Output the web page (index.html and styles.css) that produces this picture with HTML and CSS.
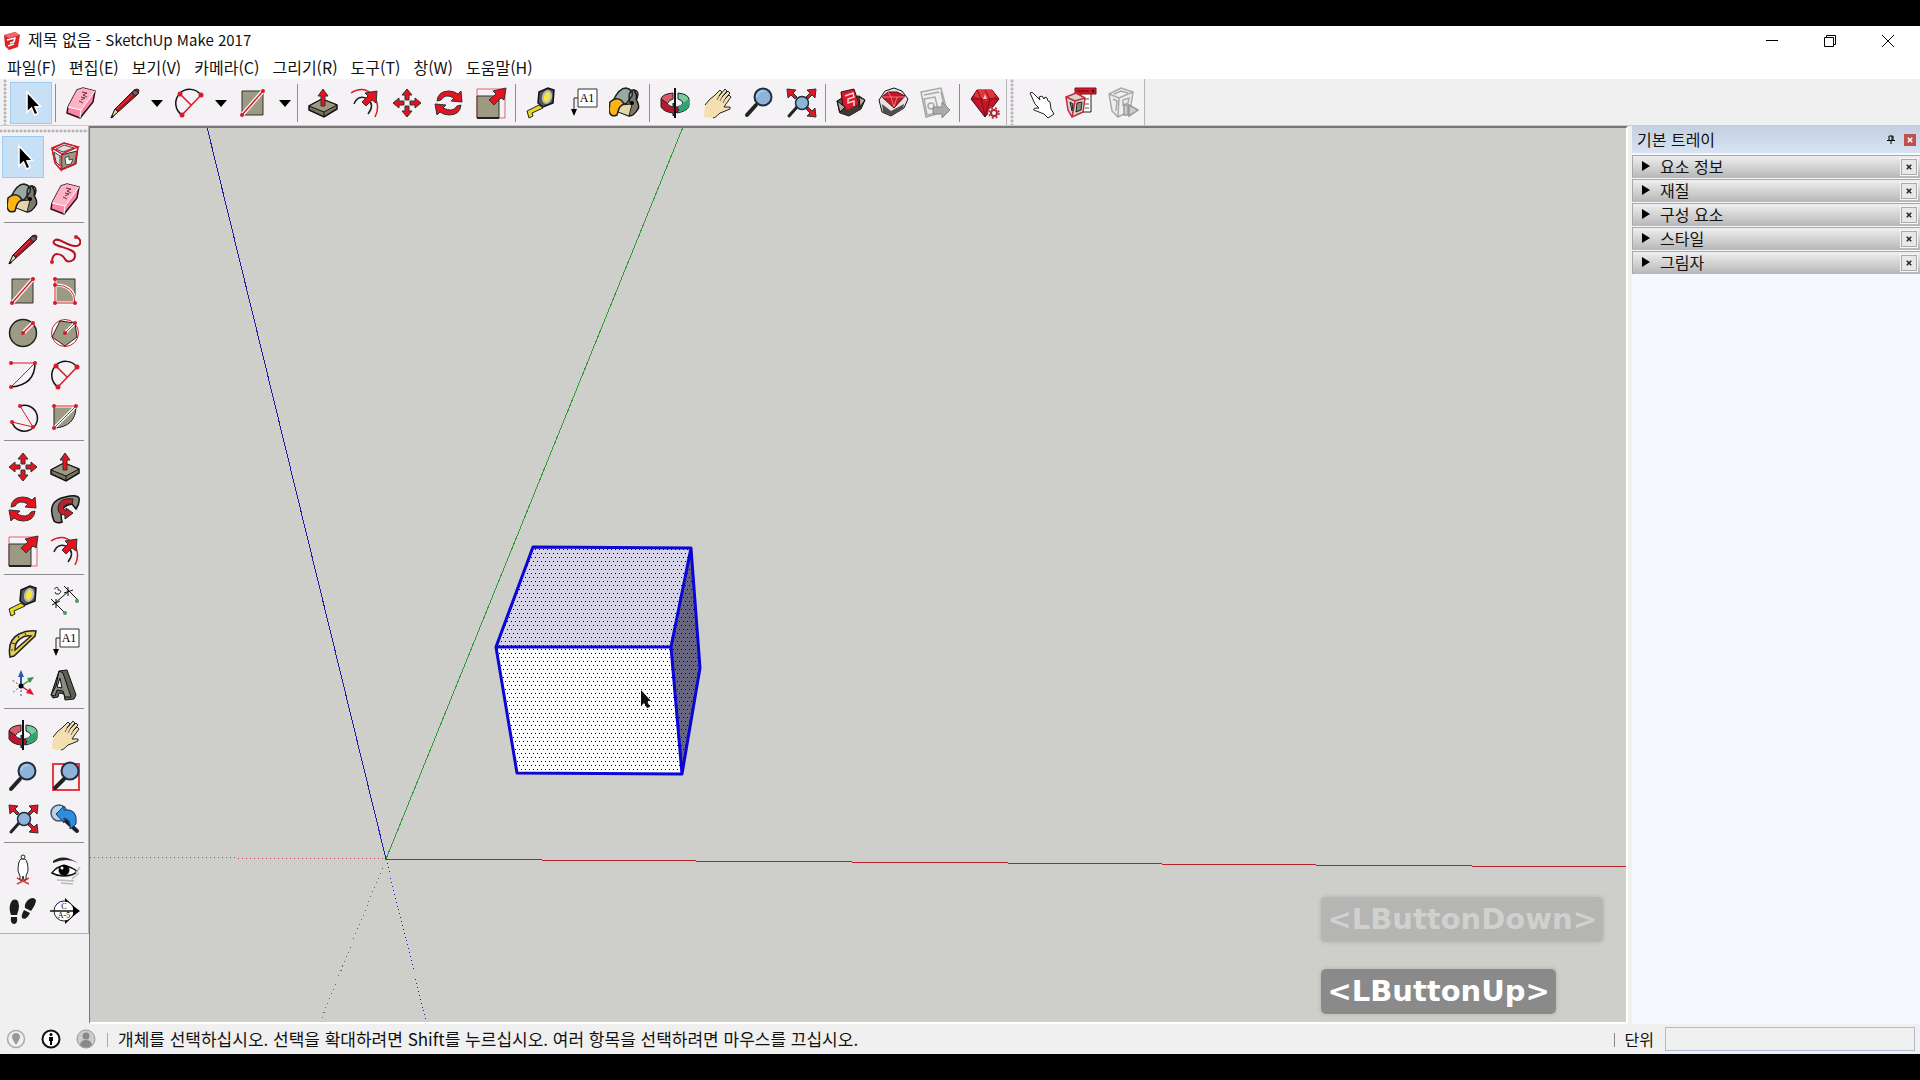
FILE: index.html
```html
<!DOCTYPE html>
<html lang="ko">
<head>
  <meta charset="UTF-8" />
  <meta name="viewport" content="width=device-width, initial-scale=1.0"/>
  <title>제목 없음 - SketchUp Make 2017</title>
  <link rel="stylesheet" href="styles.css">
</head>
<body>

  <!-- Icon set, every symbol on a 32x32 grid -->
  <svg class="sprite" aria-hidden="true">
    <symbol id="i-select" viewBox="0 0 32 32">
      <path d="M12 5V25L16.500 21 19.500 28 23 26.500 20 20 25.500 19.500Z" fill="#000" stroke="#fff" stroke-width="1.500"/>
    </symbol>
    <symbol id="i-component" viewBox="0 0 32 32">
      <path d="M3 8 15 2 29 6 27 23 12 29 6 22Z" fill="#fff" stroke="#222"/>
      <path d="M12 14 28 10 26 23 13 28Z" fill="#9c9a82" stroke="#222"/>
      <path d="M7 8 15 4 25 7 14 11ZM5 11 11 15 11 25 7 21Z" fill="#ddd" stroke="#444"/>
      <path d="M16 17l4-2v4l4-1-2 5-5 1z" fill="#fff" stroke="#444"/>
      <path d="M3 7 15 2 29 6 13 13ZM3 7 6 22 12 29 13 13M29 6 26 23 12 29" fill="none" stroke="#d8192b" stroke-width="1.500"/>
    </symbol>
    <symbol id="i-bucket" viewBox="0 0 32 32">
      <path d="M12 5 25 3Q29 9 27 12 31 19 29 22 25 29 20 29L9 24Z" fill="#80796b" stroke="#111" stroke-width="1.500"/>
      <path d="M11 18 23 17 20 29 9 25Z" fill="#e4d5aa" stroke="#222"/>
      <path d="M4 14Q10 1 17 1 25 3 23 9L17 17Z" fill="#9aa8a2" stroke="#222" stroke-width="1.500"/>
      <path d="M1 15Q8 9 13 14L15 17Q10 18 8 28 1 31 0 23Z" fill="#fdb515" stroke="#222" stroke-width="1.500"/>
      <path d="M21 16Q18 4 25 3 31 4 28 12" fill="none" stroke="#222" stroke-width="1.500"/><circle cx="23" cy="16" r="2"/>
    </symbol>
    <symbol id="i-eraser" viewBox="0 0 32 32">
      <path d="M12 3 18 1 30 4 28 15 15 31 2 26 3 20Z" fill="#fb86a5" stroke="#301018" stroke-width="1.500"/>
      <path d="M12 3 18 1 30 4 16 23 3 20Z" fill="#fcb3c4"/><path d="M30 4 16 23 15 31M3 20 16 23" fill="none" stroke="#fff"/>
      <path d="M17 5 22 6 18 8 22 10M16 10 20 11 16 13M14 14 18 16" fill="none" stroke="#683040"/>
    </symbol>
    <symbol id="i-pencil" viewBox="0 0 32 32">
      <path d="M25 3Q28 1 30 3 30 5 28 8L9 25 2 31 6 22Z" fill="#b5121f" stroke="#222"/>
      <path d="M6 22 9 25 2 31Z" fill="#ecd9a0" stroke="#222"/><path d="M23 5 26 9 30 6 26 3Z" fill="#666" stroke="#222"/><path d="M8 22 23 8" stroke="#e0505a"/><path d="M2 31 3 28 5 30Z"/>
    </symbol>
    <symbol id="i-freehand" viewBox="0 0 32 32">
      <path d="M27 4C33 6 33 13 26 13 17 13 9 3 5 8 1 14 26 14 26 22 26 29 18 30 16 26 13 21 3 17 3 29" fill="none" stroke="#b5121f" stroke-width="2"/>
      <circle cx="27" cy="4" r="2" fill="#d8192b"/><circle cx="3" cy="29" r="2" fill="#d8192b"/>
    </symbol>
    <symbol id="i-rect" viewBox="0 0 32 32">
      <path d="M5 4H26V28H5Z" fill="#9c9a82" stroke="#333"/><path d="M5 28 26 4" stroke="#fff" stroke-width="4"/><path d="M5 28 26 4" stroke="#d8192b" stroke-width="1.500"/>
      <circle cx="5" cy="28" r="2" fill="#d8192b"/><circle cx="26" cy="4" r="2" fill="#d8192b"/>
    </symbol>
    <symbol id="i-rotrect" viewBox="0 0 32 32">
      <path d="M6 4H26V28H6Z" fill="#9c9a82" stroke="#333"/><path d="M6 4V28H26Q26 10 6 10" fill="none" stroke="#fff" stroke-width="3"/><path d="M6 4V28H26Q26 10 6 10" fill="none" stroke="#d8192b"/>
      <g fill="#d8192b"><circle cx="6" cy="4" r="2"/><circle cx="6" cy="10" r="2"/><circle cx="6" cy="28" r="2"/><circle cx="26" cy="28" r="2"/></g>
    </symbol>
    <symbol id="i-circle" viewBox="0 0 32 32">
      <circle cx="16" cy="16" r="13.500" fill="#9c9a82" stroke="#222" stroke-width="1.500"/><path d="M16 16 26 6" stroke="#fff" stroke-width="4"/><path d="M16 16 26 6" stroke="#d8192b" stroke-width="1.500"/>
      <circle cx="16" cy="16" r="2" fill="#d8192b"/><circle cx="26" cy="6" r="2" fill="#d8192b"/>
    </symbol>
    <symbol id="i-polygon" viewBox="0 0 32 32">
      <circle cx="16" cy="16" r="13.500" fill="#fff" stroke="#d8192b"/><path d="M11 4 26 6 28 20 16 29 3 20Z" fill="#9c9a82" stroke="#222"/><path d="M16 16 26 6" stroke="#fff" stroke-width="3"/><path d="M16 16 26 6" stroke="#d8192b"/>
      <circle cx="16" cy="16" r="2" fill="#d8192b"/><circle cx="26" cy="6" r="2" fill="#d8192b"/>
    </symbol>
    <symbol id="i-arc" viewBox="0 0 32 32">
      <path d="M28 4Q28 26 4 28" fill="none" stroke="#111" stroke-width="1.500"/><path d="M4 4H28L4 28" fill="none" stroke="#d8192b"/>
      <g fill="#d8192b"><circle cx="4" cy="4" r="2"/><circle cx="28" cy="4" r="2"/><circle cx="4" cy="28" r="2"/></g>
    </symbol>
    <symbol id="i-arc2" viewBox="0 0 32 32">
      <path d="M28 8A14 14 0 1 0 9 28" fill="none" stroke="#111" stroke-width="1.500"/><path d="M28 8 9 28M7 7 18 18" fill="none" stroke="#d8192b" stroke-width="1.500"/>
      <g fill="#d8192b"><circle cx="28" cy="8" r="2.500"/><circle cx="7" cy="7" r="2.500"/><circle cx="9" cy="28" r="2.500"/></g>
    </symbol>
    <symbol id="i-arc3" viewBox="0 0 32 32">
      <path d="M13 5A13 13 0 1 1 5 21" fill="none" stroke="#111" stroke-width="1.500"/><path d="M13 5 26 26 5 21" fill="none" stroke="#d8192b"/>
      <g fill="#d8192b"><circle cx="13" cy="5" r="2"/><circle cx="5" cy="21" r="2"/><circle cx="26" cy="26" r="2"/></g>
    </symbol>
    <symbol id="i-pie" viewBox="0 0 32 32">
      <path d="M5 5H27Q27 26 5 27Z" fill="#9c9a82" stroke="#222"/><path d="M5 5H27L5 27" fill="none" stroke="#fff" stroke-width="3"/><path d="M5 5H27L5 27" fill="none" stroke="#d8192b"/>
      <g fill="#d8192b"><circle cx="5" cy="5" r="2"/><circle cx="27" cy="5" r="2"/><circle cx="5" cy="27" r="2"/></g>
    </symbol>
    <symbol id="i-move" viewBox="0 0 32 32">
      <g fill="#e5121f" stroke="#333"><path d="M16 2 21 8H18V13H14V8H11Z"/><path d="M30 16 24 11V14H19V18H24V21Z"/><path d="M16 30 11 24H14V19H18V24H21Z"/><path d="M2 16 8 21V18H13V14H8V11Z"/></g>
    </symbol>
    <symbol id="i-pushpull" viewBox="0 0 32 32">
      <path d="M2 19 15 12 30 18V22L17 30 2 23Z" fill="#77755f" stroke="#111" stroke-width="1.500"/><path d="M2 19 15 12 30 18 17 25Z" fill="#9c9a82" stroke="#111"/><path d="M17 25V30" stroke="#111"/>
      <path d="M16 2 21 9H18V19H14V9H11Z" fill="#e5121f" stroke="#333"/>
    </symbol>
    <symbol id="i-rotate" viewBox="0 0 32 32">
      <g fill="#e5121f" stroke="#333"><path d="M4 14Q5 4 16 4 21 4 25 7L28 4 29 15 18 14 21 11Q12 6 8 13Z"/><path d="M28 18Q27 28 16 28 11 28 7 25L4 28 2 17 13 18 10 21Q20 26 24 19Z"/></g>
    </symbol>
    <symbol id="i-followme" viewBox="0 0 32 32">
      <path d="M5 28Q-3 8 16 4 28 1 30 5 31 10 27 16L23 11Q9 13 13 29 8 31 5 28Z" fill="#8a887d" stroke="#111" stroke-width="1.500"/>
      <path d="M24 6Q10 4 9 15 9 22 16 22V26L24 20 17 15V18Q13 16 15 13 18 10 23 11Z" fill="#c0202b" stroke="#222"/>
    </symbol>
    <symbol id="i-scale" viewBox="0 0 32 32">
      <path d="M2 2H30V31H2Z" fill="none" stroke="#e86070"/><path d="M2 9H24V31H2Z" fill="#9c9a82" stroke="#333"/><path d="M2 31H24" stroke="#222" stroke-width="2"/>
      <path d="M31 1 29 13 26 11 19 18 14 13 21 7 18 4Z" fill="#e5121f" stroke="#333"/>
    </symbol>
    <symbol id="i-offset" viewBox="0 0 32 32">
      <path d="M2 6Q14-2 24 8 32 19 26 30" fill="none" stroke="#e5121f" stroke-width="1.500"/><path d="M5 17Q9 7 19 12 26 18 19 27" fill="none" stroke="#222" stroke-width="1.500"/>
      <path d="M28 4 27 16 23 13 17 19 13 15 19 9 16 6Z" fill="#e5121f" stroke="#333"/>
    </symbol>
    <symbol id="i-tape" viewBox="0 0 32 32">
      <path d="M14 5 23 1 29 3 28 16 18 20 13 16Z" fill="#555" stroke="#111" stroke-width="1.500"/><ellipse cx="22" cy="10" rx="4" ry="6" fill="#f4e83a" stroke="#bbb" stroke-width="2" transform="rotate(15 22 10)"/>
      <path d="M14 18 18 21 7 26 8 29 4 31 2 24Z" fill="#e6d91e" stroke="#222"/>
    </symbol>
    <symbol id="i-dimension" viewBox="0 0 32 32">
      <path d="M6 18 20 6M2 14 16 28M15 1 29 15M3 20 11 16M15 8 24 5M7 14V23M19 2V11" stroke="#111" fill="none"/><path d="M5 4Q10 0 9 5 14 5 10 9 6 10 6 7" fill="none" stroke="#333"/>
      <circle cx="16" cy="28" r="2" fill="#4b9e54"/><circle cx="28" cy="16" r="2" fill="#4b9e54"/>
    </symbol>
    <symbol id="i-protractor" viewBox="0 0 32 32">
      <path d="M3 30Q0 13 12 7 20 3 29 4L28 9 7 29ZM8 23 24 9Q18 8 13 12 8 15 8 23Z" fill="#e5cf58" fill-rule="evenodd" stroke="#222" stroke-width="1.500"/>
      <path d="M4 23 6 23M5 16 8 17M11 9 12 11M18 6 19 8" stroke="#222"/>
    </symbol>
    <symbol id="i-text" viewBox="0 0 32 32">
      <path d="M11 2H30V20H11Z" fill="#fff" stroke="#333"/><path d="M11 11H7V25" fill="none" stroke="#222"/><path d="M4 22H10L7 29Z"/>
      <text x="20" y="15" class="icon-text">A1</text>
    </symbol>
    <symbol id="i-axes" viewBox="0 0 32 32">
      <path d="M14 16V6" stroke="#2859a8" stroke-width="2"/><path d="M11 8 14 1 17 8Z" fill="#2859a8"/><path d="M14 17V28" stroke="#2859a8" stroke-dasharray="2 2"/>
      <path d="M14 17 23 11" stroke="#3b9444" stroke-width="1.500"/><path d="M20 9 27 8 23 14Z" fill="#3b9444"/><path d="M14 17 5 24" stroke="#3b9444" stroke-dasharray="2 2"/>
      <path d="M14 17 23 23" stroke="#d8192b" stroke-width="1.500"/><path d="M23 19 27 26 19 24Z" fill="#d8192b"/><path d="M14 17 5 11" stroke="#d8192b" stroke-dasharray="2 2"/><circle cx="14" cy="17" r="2.500"/>
    </symbol>
    <symbol id="i-text3d" viewBox="0 0 32 32">
      <path d="M10 2 18 1 27 26 25 30 16 31 15 25 10 24 9 28 4 29 2 26Z" fill="#5f5f58" stroke="#111"/><path d="M10 2 14 4 22 28H16L14 22 8 21 6 27 2 26 7 17Z" fill="#8b8b82" stroke="#111"/><path d="M11 9 8 18 13 19Z" fill="#f4f2f4" stroke="#111"/>
    </symbol>
    <symbol id="i-orbit" viewBox="0 0 32 32">
      <path d="M19 6Q29 7 30 12V19Q29 24 18 26V20Q23 19 24 16 23 13 19 12Z" fill="#7cc79b" stroke="#123"/><path d="M24 16 30 12V19Q29 24 19 25V20Z" fill="#36a070"/>
      <path d="M14 6Q3 7 2 12L8 17Q10 13 14 12Z" fill="#d85b68" stroke="#222"/><path d="M2 12V20Q5 25 14 26V29L20 23 14 16V20Q9 19 8 16Z" fill="#bd152d" stroke="#222"/><path d="M16 1V31" stroke="#111" stroke-width="2"/>
    </symbol>
    <symbol id="i-pan" viewBox="0 0 32 32">
      <path d="M3 30 4 18Q9 11 13 9L19 3 21 5 18 9 24 2 26 4 21 10 27 4 29 6 24 12 28 8 30 10 25 17 23 20 29 20 29 22Q22 25 19 26 14 31 12 31Z" fill="#f4dfb0"/>
      <path d="M4 18Q9 11 13 9L19 3 21 5 18 9 24 2 26 4 21 10 27 4 29 6 24 12 28 8 30 10 25 17 23 20 29 20 29 22Q22 25 19 26 14 31 12 31" fill="none" stroke="#222"/>
      <path d="M18 9 16 13M21 10 19 14M24 12 22 16" stroke="#665"/>
    </symbol>
    <symbol id="i-zoom" viewBox="0 0 32 32">
      <path d="M13 18 4 28" stroke="#222" stroke-width="4" stroke-linecap="round"/><circle cx="20" cy="10" r="8.500" fill="#8eb3d8" stroke="#222c3e" stroke-width="2"/><path d="M14 10Q15 4 21 4" fill="none" stroke="#b5cfe8" stroke-width="1.500"/>
    </symbol>
    <symbol id="i-zoomwin" viewBox="0 0 32 32">
      <path d="M4 3H30V29H4Z" fill="none" stroke="#e33a46" stroke-width="2"/><path d="M15 18 6 27" stroke="#222" stroke-width="4" stroke-linecap="round"/><circle cx="21" cy="10" r="8.500" fill="#8eb3d8" stroke="#222c3e" stroke-width="2"/>
    </symbol>
    <symbol id="i-zoomext" viewBox="0 0 32 32">
      <g fill="#d8192b" stroke="#333"><path d="M2 2 11 3 8 6 12 10 10 12 6 8 3 11Z"/><path d="M31 2 22 3 25 6 21 10 23 12 27 8 30 11Z"/><path d="M31 30 22 29 25 26 21 22 23 20 27 24 30 21Z"/></g>
      <path d="M12 20 4 29" stroke="#222" stroke-width="3" stroke-linecap="round"/><circle cx="17" cy="16" r="6.500" fill="#8eb3d8" stroke="#222c3e" stroke-width="1.500"/>
    </symbol>
    <symbol id="i-previous" viewBox="0 0 32 32">
      <circle cx="10" cy="10" r="8" fill="#bcd3e6" stroke="#405470" stroke-width="1.500"/><path d="M17 18 28 28" stroke="#222" stroke-width="4" stroke-linecap="round"/>
      <path d="M7 11 15 3V7Q29 5 27 21L21 26Q22 16 15 15V20Z" fill="#2d8ddd" stroke="#123b70"/>
    </symbol>
    <symbol id="i-camera" viewBox="0 0 32 32">
      <path d="M10 31 22 25M22 31 10 25" stroke="#e33a46" stroke-width="1.500"/><path d="M14 6Q11 8 11 18L13 23V27H15L16 23 17 27H19V23L21 18Q21 8 18 6Z" fill="#fff" stroke="#222"/><circle cx="16" cy="4" r="2" fill="#fff" stroke="#222"/>
    </symbol>
    <symbol id="i-eye" viewBox="0 0 32 32">
      <path d="M4 8Q14 0 29 10 18 4 4 10Z" fill="#222"/><path d="M3 20Q12 7 28 18 25 23 14 23 8 23 3 20Z" fill="#fff" stroke="#111" stroke-width="1.500"/><circle cx="15" cy="17" r="5.500"/><circle cx="13" cy="15" r="1.500" fill="#fff"/>
      <path d="M8 27 25 28M12 30 24 31M27 20 31 14M23 26 30 20" stroke="#bbb" stroke-width="1.500"/>
    </symbol>
    <symbol id="i-walk" viewBox="0 0 32 32">
      <g fill="#1c1c1c"><path d="M3 10Q5 3 10 5 14 9 10 20L4 20Q2 14 3 10Z"/><path d="M4 22 10 22Q11 29 7 29 3 29 4 22Z"/><path d="M21 5Q26 1 29 5 29 9 24 16L18 13Q17 9 21 5Z"/><path d="M17 15 23 18Q19 26 15 23 14 20 17 15Z"/></g>
    </symbol>
    <symbol id="i-section" viewBox="0 0 32 32">
      <path d="M16 3 30 16 16 29Z"/><circle cx="15" cy="16" r="10" fill="#fff" stroke="#222"/><path d="M1 16H29" stroke="#111" stroke-width="1.500"/><path d="M24 11 31 16 24 21Z"/>
      <text x="15" y="14" class="icon-text-sm">C</text><text x="15" y="23" class="icon-text-sm">A-5</text>
    </symbol>
    <symbol id="i-warehouse" viewBox="0 0 32 32">
      <path d="M2 14 7 11 24 9 30 13 26 22 14 29 5 26Z" fill="#5b504b" stroke="#111"/><path d="M6 5 19 2 24 17 13 24 8 20Z" fill="#d8192b" stroke="#301010"/><path d="M10 9 18 6 19 10 13 12V16L19 14V19" fill="none" stroke="#ffd0ce" stroke-width="1.500"/><path d="M2 15 13 23 27 16 26 22 14 29 4 26Z" fill="#403735"/><path d="M2 14 10 20 5 25ZM24 10 30 13 25 20Z" fill="#b8aaa0" stroke="#111"/>
    </symbol>
    <symbol id="i-extwarehouse" viewBox="0 0 32 32">
      <path d="M2 13 8 4 17 1 25 4 31 12 27 21 14 29 5 25Z" fill="#e4e2e2" stroke="#111"/><path d="M5 17 14 24 27 17 26 22 14 29 6 25Z" fill="#554d4c"/><path d="M5 10 11 5 20 5 28 9 17 21Z" fill="#c71727" stroke="#46101a"/><path d="M5 10H28M11 5 14 10 17 20 20 10" fill="none" stroke="#f17878"/>
    </symbol>
    <symbol id="i-layout" viewBox="0 0 32 32">
      <path d="M2 5 22 1 28 24 7 30Z" fill="#eee" stroke="#aaa" stroke-width="1.500"/><path d="M5 8 20 5M22 5 25 19M5 12 16 10 20 26 8 28Z" fill="none" stroke="#aaa" stroke-width="1.500"/><circle cx="12" cy="19" r="3" fill="none" stroke="#aaa" stroke-width="1.500"/>
      <path d="M14 20H23V15L31 23 23 31V27H14Z" fill="#aaa" stroke="#888"/>
    </symbol>
    <symbol id="i-extmanager" viewBox="0 0 32 32">
      <path d="M8 3H23L30 12 16 30 2 12Z" fill="#c31628" stroke="#450a14"/><path d="M8 3H23L27 9 17 14 5 9Z" fill="#e2343d"/><path d="M2 12H30M8 3 12 12 16 29 21 12 16 3" fill="none" stroke="#7c101c"/><path d="M16 7 14 12 18 12Z" fill="#ffc0b8"/>
      <circle cx="25" cy="26" r="6" fill="#f4f2f4"/><circle cx="25" cy="26" r="3" fill="none" stroke="#ac2633" stroke-width="2"/><circle cx="25" cy="26" r="5" fill="none" stroke="#ac2633" stroke-width="1.500" stroke-dasharray="2 2"/>
    </symbol>
    <symbol id="i-interact" viewBox="0 0 32 32">
      <path d="M7 6Q9 4 11 7L17 13 16 10 19 9 21 12 22 10 24 11 25 14 27 15 28 22 31 27 25 31 21 27 11 23Q9 21 16 21L12 17Z" fill="#fff" stroke="#222"/>
    </symbol>
    <symbol id="i-compoptions" viewBox="0 0 32 32">
      <path d="M16 6H26V25H16Z" fill="#fff" stroke="#222"/><path d="M10 1H31V7H10Z" fill="#d8192b" stroke="#7c101c"/><path d="M12 4H24" stroke="#700"/><path d="M26 3H30L28 6Z" fill="#500"/><path d="M20 12H24M20 17H24M20 21H24" stroke="#555"/>
      <path d="M1 10 11 6 20 11 18 25 7 30 3 23Z" fill="#d9d2d0" stroke="#c42b3a" stroke-width="1.500"/><path d="M1 10 10 14 20 11M10 14 7 30" fill="none" stroke="#c42b3a" stroke-width="1.500"/><path d="M12 16 17 15 16 23 11 25ZM5 15 8 17 7 24Z" fill="#8d8b78" stroke="#222"/>
    </symbol>
    <symbol id="i-classifier" viewBox="0 0 32 32">
      <path d="M2 7 14 1 26 5 23 24 11 30 5 24Z" fill="#eee" stroke="#aaa" stroke-width="1.500"/><path d="M2 7 12 11 26 5M12 11 11 30M6 12 10 14 9 24M16 13 22 11 21 16 16 18ZM7 7 14 4 21 6" fill="none" stroke="#aaa" stroke-width="1.500"/><path d="M17 18H21V28H17ZM22 18 31 23 22 29Z" fill="#ccc" stroke="#999" stroke-width="1.500"/>
    </symbol>
  </svg>

  <div class="window">
    <header class="titlebar">
      <svg class="logo" viewBox="0 0 18 20"><path d="M1 4 12 1 17 4 15 16 6 19 2 15Z" fill="#d8252c"/><path d="M1 4 12 1 17 4 6 7Z" fill="#f0696c"/><path d="M4 9 12 7 11 11 7 12M5 15 11 13" fill="none" stroke="#fff" stroke-width="1.500"/></svg>
      <h1>제목 없음 <span>- SketchUp Make 2017</span></h1>
      <div class="window-buttons">
        <button aria-label="최소화"><svg viewBox="0 0 14 14"><path d="M1 6.500H13"/></svg></button>
        <button aria-label="이전 크기로"><svg viewBox="0 0 14 14"><path d="M1.500 3.500H10.500V12.500H1.500ZM3.500 3.500V1.500H12.500V10.500H10.500"/></svg></button>
        <button aria-label="닫기"><svg viewBox="0 0 14 14"><path d="M1 1 13 13M13 1 1 13"/></svg></button>
      </div>
    </header>

    <nav class="menubar">
      <button>파일(F)</button>
      <button>편집(E)</button>
      <button>보기(V)</button>
      <button>카메라(C)</button>
      <button>그리기(R)</button>
      <button>도구(T)</button>
      <button>창(W)</button>
      <button>도움말(H)</button>
    </nav>

    <div class="toolbars">
      <div class="toolbar">
        <button class="tool active" aria-label="선택"><svg><use href="#i-select"/></svg></button>
        <span class="sep"></span>
        <button class="tool" aria-label="지우개"><svg><use href="#i-eraser"/></svg></button>
        <button class="tool split" aria-label="선"><svg><use href="#i-pencil"/></svg></button><button class="drop" aria-label="선 도구"></button>
        <button class="tool split" aria-label="호"><svg><use href="#i-arc2"/></svg></button><button class="drop" aria-label="호 도구"></button>
        <button class="tool split" aria-label="직사각형"><svg><use href="#i-rect"/></svg></button><button class="drop" aria-label="도형 도구"></button>
        <span class="sep"></span>
        <button class="tool" aria-label="밀기/끌기"><svg><use href="#i-pushpull"/></svg></button>
        <button class="tool" aria-label="오프셋"><svg><use href="#i-offset"/></svg></button>
        <button class="tool" aria-label="이동"><svg><use href="#i-move"/></svg></button>
        <button class="tool" aria-label="회전"><svg><use href="#i-rotate"/></svg></button>
        <button class="tool" aria-label="배율"><svg><use href="#i-scale"/></svg></button>
        <span class="sep"></span>
        <button class="tool" aria-label="줄자"><svg><use href="#i-tape"/></svg></button>
        <button class="tool" aria-label="텍스트"><svg><use href="#i-text"/></svg></button>
        <button class="tool" aria-label="페인트통"><svg><use href="#i-bucket"/></svg></button>
        <span class="sep"></span>
        <button class="tool" aria-label="궤도"><svg><use href="#i-orbit"/></svg></button>
        <button class="tool" aria-label="팬"><svg><use href="#i-pan"/></svg></button>
        <button class="tool" aria-label="확대/축소"><svg><use href="#i-zoom"/></svg></button>
        <button class="tool" aria-label="범위 확대"><svg><use href="#i-zoomext"/></svg></button>
        <span class="sep"></span>
        <button class="tool" aria-label="3D Warehouse"><svg><use href="#i-warehouse"/></svg></button>
        <button class="tool" aria-label="Extension Warehouse"><svg><use href="#i-extwarehouse"/></svg></button>
        <button class="tool" aria-label="LayOut"><svg><use href="#i-layout"/></svg></button>
        <span class="sep"></span>
        <button class="tool" aria-label="확장 관리자"><svg><use href="#i-extmanager"/></svg></button>
      </div>
      <div class="toolbar">
        <button class="tool" aria-label="상호 작용"><svg><use href="#i-interact"/></svg></button>
        <button class="tool" aria-label="구성 요소 옵션"><svg><use href="#i-compoptions"/></svg></button>
        <button class="tool" aria-label="구성 요소 특성"><svg><use href="#i-classifier"/></svg></button>
      </div>
    </div>

    <main class="workspace">
      <aside class="side">
        <div class="palette">
          <div class="group">
            <button class="tool active" aria-label="선택"><svg><use href="#i-select"/></svg></button>
            <button class="tool" aria-label="구성 요소 만들기"><svg><use href="#i-component"/></svg></button>
            <button class="tool" aria-label="페인트통"><svg><use href="#i-bucket"/></svg></button>
            <button class="tool" aria-label="지우개"><svg><use href="#i-eraser"/></svg></button>
          </div>
          <div class="group">
            <button class="tool" aria-label="선"><svg><use href="#i-pencil"/></svg></button>
            <button class="tool" aria-label="자유 곡선"><svg><use href="#i-freehand"/></svg></button>
            <button class="tool" aria-label="직사각형"><svg><use href="#i-rect"/></svg></button>
            <button class="tool" aria-label="회전된 직사각형"><svg><use href="#i-rotrect"/></svg></button>
            <button class="tool" aria-label="원"><svg><use href="#i-circle"/></svg></button>
            <button class="tool" aria-label="다각형"><svg><use href="#i-polygon"/></svg></button>
            <button class="tool" aria-label="호"><svg><use href="#i-arc"/></svg></button>
            <button class="tool" aria-label="2점 호"><svg><use href="#i-arc2"/></svg></button>
            <button class="tool" aria-label="3점 호"><svg><use href="#i-arc3"/></svg></button>
            <button class="tool" aria-label="파이"><svg><use href="#i-pie"/></svg></button>
          </div>
          <div class="group">
            <button class="tool" aria-label="이동"><svg><use href="#i-move"/></svg></button>
            <button class="tool" aria-label="밀기/끌기"><svg><use href="#i-pushpull"/></svg></button>
            <button class="tool" aria-label="회전"><svg><use href="#i-rotate"/></svg></button>
            <button class="tool" aria-label="따라가기"><svg><use href="#i-followme"/></svg></button>
            <button class="tool" aria-label="배율"><svg><use href="#i-scale"/></svg></button>
            <button class="tool" aria-label="오프셋"><svg><use href="#i-offset"/></svg></button>
          </div>
          <div class="group">
            <button class="tool" aria-label="줄자"><svg><use href="#i-tape"/></svg></button>
            <button class="tool" aria-label="치수"><svg><use href="#i-dimension"/></svg></button>
            <button class="tool" aria-label="각도기"><svg><use href="#i-protractor"/></svg></button>
            <button class="tool" aria-label="텍스트"><svg><use href="#i-text"/></svg></button>
            <button class="tool" aria-label="축"><svg><use href="#i-axes"/></svg></button>
            <button class="tool" aria-label="3D 텍스트"><svg><use href="#i-text3d"/></svg></button>
          </div>
          <div class="group">
            <button class="tool" aria-label="궤도"><svg><use href="#i-orbit"/></svg></button>
            <button class="tool" aria-label="팬"><svg><use href="#i-pan"/></svg></button>
            <button class="tool" aria-label="확대/축소"><svg><use href="#i-zoom"/></svg></button>
            <button class="tool" aria-label="창 확대"><svg><use href="#i-zoomwin"/></svg></button>
            <button class="tool" aria-label="범위 확대"><svg><use href="#i-zoomext"/></svg></button>
            <button class="tool" aria-label="이전"><svg><use href="#i-previous"/></svg></button>
          </div>
          <div class="group">
            <button class="tool" aria-label="카메라 배치"><svg><use href="#i-camera"/></svg></button>
            <button class="tool" aria-label="둘러보기"><svg><use href="#i-eye"/></svg></button>
            <button class="tool" aria-label="이동 시점"><svg><use href="#i-walk"/></svg></button>
            <button class="tool" aria-label="단면"><svg><use href="#i-section"/></svg></button>
          </div>
        </div>
      </aside>

      <section class="viewport">
        <svg class="scene" viewBox="90 128 1536 894" preserveAspectRatio="xMinYMin slice">
          <defs>
            <pattern id="dots" width="4" height="8" patternUnits="userSpaceOnUse">
              <rect x="1" y="1" width="1" height="1"/><rect x="3" y="5" width="1" height="1"/>
            </pattern>
          </defs>
          <!-- axes -->
          <g fill="none" shape-rendering="crispEdges">
            <path d="M207 127 386 859" stroke="#1c1ca8"/>
            <path d="M683 127 386 859" stroke="#2f9a35"/>
            <path d="M386 859 1626 867" stroke="#b8202c"/>
            <path d="M90 857 386 859" stroke="#c04048" stroke-dasharray="1 3"/>
            <path d="M386 859 321 1020" stroke="#4c7a50" stroke-dasharray="1 4"/>
            <path d="M386 859 426 1020" stroke="#1c1ca8" stroke-dasharray="1 3"/>
          </g>
          <!-- selected cube -->
          <path d="M533 547 691 548 671 647 496 647Z" fill="#d6d3e6"/>
          <path d="M496 647H671L682 774 517 773Z" fill="#fff"/>
          <path d="M691 548 700 668 682 774 671 647Z" fill="#686580"/>
          <path d="M533 547 691 548 700 668 682 774 517 773 496 647Z" fill="url(#dots)"/>
          <path d="M533 547 691 548 700 668 682 774 517 773 496 647ZM496 647H671L691 548M671 647 682 774" fill="none" stroke="#0b05d6" stroke-width="3" stroke-linejoin="round"/>
          <path d="M641 690V706L644 703 647 708 650 707 647 701H651Z" fill="#111"/>
        </svg>
        <div class="keys">
          <span class="key fading">&lt;LButtonDown&gt;</span>
          <span class="key">&lt;LButtonUp&gt;</span>
        </div>
      </section>

      <aside class="tray">
        <div class="tray-header">
          <h2>기본 트레이</h2>
          <button class="pin" aria-label="고정"><svg viewBox="0 0 8 9"><path d="M2 5V1H6V5M5 1V5M0 5.500H8M4 6V9" fill="none" stroke="#000"/></svg></button>
          <button class="tray-close" aria-label="트레이 닫기"><svg viewBox="0 0 8 8"><path d="M1 1 7 7M7 1 1 7"/></svg></button>
        </div>
        <div class="panel"><button class="panel-name">요소 정보</button><button class="panel-close" aria-label="요소 정보 닫기"><svg viewBox="0 0 8 8"><path d="M1 1 7 7M7 1 1 7"/></svg></button></div>
        <div class="panel"><button class="panel-name">재질</button><button class="panel-close" aria-label="재질 닫기"><svg viewBox="0 0 8 8"><path d="M1 1 7 7M7 1 1 7"/></svg></button></div>
        <div class="panel"><button class="panel-name">구성 요소</button><button class="panel-close" aria-label="구성 요소 닫기"><svg viewBox="0 0 8 8"><path d="M1 1 7 7M7 1 1 7"/></svg></button></div>
        <div class="panel"><button class="panel-name">스타일</button><button class="panel-close" aria-label="스타일 닫기"><svg viewBox="0 0 8 8"><path d="M1 1 7 7M7 1 1 7"/></svg></button></div>
        <div class="panel"><button class="panel-name">그림자</button><button class="panel-close" aria-label="그림자 닫기"><svg viewBox="0 0 8 8"><path d="M1 1 7 7M7 1 1 7"/></svg></button></div>
      </aside>
    </main>

    <footer class="statusbar">
      <button aria-label="위치 정보"><svg viewBox="0 0 20 20"><circle cx="10" cy="10" r="8.500" fill="none" stroke="#aaa" stroke-width="1.500"/><path d="M10 16Q6 10 6 8A4 4 0 0 1 14 8Q14 10 10 16Z" fill="#999"/></svg></button>
      <button aria-label="제작자 정보"><svg viewBox="0 0 20 20"><circle cx="10" cy="10" r="8.500" fill="#fff" stroke="#111" stroke-width="2"/><circle cx="10" cy="5.500" r="1.500"/><path d="M8 8H12V12H11V16H9V12H8Z"/></svg></button>
      <button aria-label="로그인"><svg viewBox="0 0 20 20"><circle cx="10" cy="10" r="9" fill="#ccc" stroke="#999"/><circle cx="10" cy="7" r="3.500" fill="#888"/><path d="M4 16Q5 11 10 11 15 11 16 16 10 21 4 16Z" fill="#888"/></svg></button>
      <p>개체를 선택하십시오. 선택을 확대하려면 Shift를 누르십시오. 여러 항목을 선택하려면 마우스를 끄십시오.</p>
      <label for="measure">단위</label>
      <input type="text" id="measure">
    </footer>
  </div>

</body>
</html>
```
FILE: styles.css
```css
* {
  margin: 0;
  padding: 0;
  box-sizing: border-box;
}

/* Black bands above and below the window */
body {
  height: 100vh;
  padding: 26px 0;
  background: #000;
  color: #111;
  font-family: "Noto Sans CJK KR", sans-serif;
  font-size: 16px;
  line-height: 22px;
}

button {
  border: none;
  background: none;
  color: inherit;
  font: inherit;
}

.sprite {
  display: none;
}

.icon-text {
  font: 12px "Liberation Serif", serif;
  text-anchor: middle;
}
.icon-text-sm {
  font: 8px "Liberation Serif", serif;
  text-anchor: middle;
}

.window {
  display: flex;
  flex-direction: column;
  height: 100%;
  background: #f0f0f0;
}

/* Title bar */
.titlebar {
  display: flex;
  align-items: center;
  height: 29px;
  padding: 0 3px;
  background: #fff;
}
.titlebar h1 {
  flex: 1;
  padding-bottom: 2px;
  font-size: 16px;
  font-weight: 400;
}
.titlebar h1 span {
  font-size: 15px;
}
.logo {
  width: 18px;
  height: 20px;
  margin-right: 7px;
}
.window-buttons {
  display: flex;
}
.window-buttons button {
  display: grid;
  place-items: center;
  width: 58px;
  height: 29px;
}
.window-buttons svg {
  width: 14px;
  height: 14px;
  fill: none;
  stroke: #000;
}

/* Menu */
.menubar {
  display: flex;
  gap: 13px;
  height: 24px;
  padding: 0 7px;
  background: #fff;
}

/* Top toolbars */
.toolbars {
  display: flex;
  height: 47px;
  border-bottom: 1px solid #ccc;
}
.toolbar {
  display: flex;
  align-items: center;
  padding: 2px 0 0 10px;
  border-right: 1px solid #b4b4b4;
  background: radial-gradient(circle, #b8b8b8 1px, transparent 2px) 3px 4px / 4px 4px repeat-y, #f4f2f4;
}
.toolbar + .toolbar {
  padding-left: 11px;
}
.tool {
  display: grid;
  place-items: center;
  width: 42px;
  height: 42px;
}
.tool.split {
  width: 46px;
}
.tool svg {
  width: 32px;
  height: 32px;
}
.tool.active {
  border: 1px solid #9dcbf0;
  background: #c7e0f6;
}
.drop {
  display: grid;
  place-items: center;
  width: 18px;
  height: 42px;
}
.drop::before {
  content: "";
  border: 6px solid transparent;
  border-top: 7px solid #000;
  border-bottom: 0;
}
.sep {
  width: 8px;
  height: 38px;
  background: linear-gradient(#8c8c8c, #8c8c8c) 3px 0 / 1px 100% no-repeat;
}

/* Work area */
.workspace {
  display: flex;
  flex: 1;
  min-height: 0;
}
.side {
  width: 89px;
  flex: none;
}
.palette {
  padding: 10px 0 1px 2px;
  border: solid #b4b4b4;
  border-width: 0 1px 1px 0;
  background: radial-gradient(circle, #b8b8b8 1px, transparent 2px) 3px 3px / 4px 4px repeat-x, #f4f2f4;
}
.group {
  display: grid;
  grid-template-columns: 42px 42px;
}
.group + .group {
  padding-top: 8px;
  background: linear-gradient(#8c8c8c, #8c8c8c) 2px 2px / 80px 1px no-repeat;
}

.viewport {
  position: relative;
  flex: 1;
  border: solid #fff;
  border-width: 2px;
  border-top-color: #767676;
  border-left-color: #767676;
  border-left-width: 1px;
  background: #cecfcb;
  overflow: hidden;
}
.scene {
  display: block;
  width: 100%;
  height: 100%;
}

/* Key press overlay on the drawing */
.keys {
  position: absolute;
  right: 23px;
  bottom: 8px;
  display: flex;
  flex-direction: column;
  align-items: flex-start;
  gap: 27px;
}
.key {
  padding: 0 6px;
  border-radius: 5px;
  background: #8a8a8a;
  box-shadow: 0 0 3px 2px #c0c0be;
  color: #fff;
  font: bold 29px/45px "DejaVu Sans", sans-serif;
}
.key.fading {
  background: #b5b5b3;
  color: #d0d0ce;
}

/* Tray */
.tray {
  flex: none;
  width: 288px;
  margin-left: 4px;
  background: #f5f8fe;
}
.tray-header {
  display: flex;
  align-items: center;
  height: 27px;
  padding: 0 4px 0 5px;
  margin-bottom: 2px;
  background: linear-gradient(#c4cfdf, #d7e3f3);
}
.tray-header h2 {
  flex: 1;
  padding-bottom: 2px;
  font-size: 16px;
  font-weight: 400;
}
.pin svg {
  display: block;
  width: 8px;
  height: 9px;
}
.tray-close {
  display: grid;
  place-items: center;
  width: 12px;
  height: 12px;
  margin-left: 9px;
  background: #c0504f;
}
.tray-close svg,
.panel-close svg {
  width: 6px;
  height: 6px;
  fill: none;
  stroke: #fff;
  stroke-width: 2;
}
.panel {
  display: flex;
  align-items: center;
  height: 23px;
  padding-right: 3px;
  margin-bottom: 1px;
  border: solid #a8a8a8;
  border-width: 1px 0 0 1px;
  background: linear-gradient(#f0eff0, #b6b6b6);
}
.panel-name {
  display: flex;
  flex: 1;
  align-items: center;
  gap: 10px;
  padding: 0 0 2px 9px;
  line-height: 20px;
}
.panel-name::before {
  content: "";
  border: 5px solid transparent;
  border-left: 8px solid #000;
  border-right: 0;
}
.panel-close {
  display: grid;
  place-items: center;
  width: 16px;
  height: 16px;
  border: 1px solid #aaa;
  outline: 1px solid #f8f8f8;
  background: #e8e8e8;
}
.panel-close svg {
  stroke: #222;
}

/* Status bar */
.statusbar {
  display: flex;
  align-items: center;
  height: 30px;
  padding: 0 5px 0 6px;
}
.statusbar button {
  width: 20px;
  height: 20px;
  margin-right: 15px;
}
.statusbar button:last-of-type {
  margin-right: 11px;
}
.statusbar svg {
  display: block;
}
.statusbar p {
  flex: 1;
  padding-left: 11px;
  background: linear-gradient(#aaa, #aaa) 0 5px / 1px 14px no-repeat;
  font-size: 17px;
}
.statusbar label {
  padding: 0 11px;
  background: linear-gradient(#888, #888) 0 5px / 1px 14px no-repeat;
}
.statusbar input {
  width: 250px;
  height: 24px;
  border: 1px solid #b0bbd4;
  background: #f0f0f0;
}
```
